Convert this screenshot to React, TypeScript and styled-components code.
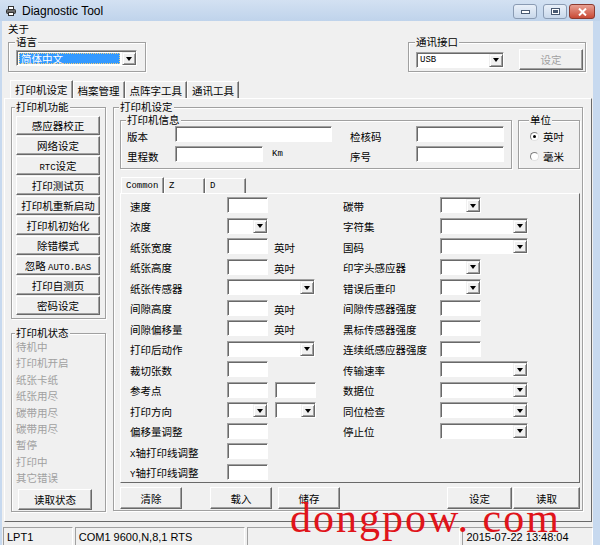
import React from 'react';
import styled, { createGlobalStyle } from 'styled-components';

const GlobalStyle = createGlobalStyle`
  html, body {
    margin: 0;
    padding: 0;
    background: #fff;
  }
  body {
    font-family: "Noto Sans CJK SC", "Liberation Sans", sans-serif;
    font-size: 10.5px;
    color: #000;
  }
`;

const Window = styled.div`
  position: relative;
  width: 600px;
  height: 545px;
  overflow: hidden;
  display: flex;
  flex-direction: column;
  background: #c7d9ef;
`;

const TitleBar = styled.div`
  height: 21px;
  flex: none;
  display: flex;
  align-items: center;
  padding-left: 6px;
  background: linear-gradient(to bottom, #d3e1f2, #bfd3eb);
`;

const TitleText = styled.span`
  margin-left: 6px;
  font-family: "Liberation Sans", sans-serif;
  font-size: 12px;
  color: #000;
`;

const CaptionButtons = styled.div`
  margin-left: auto;
  margin-right: 5px;
  align-self: flex-start;
  margin-top: 4px;
  display: flex;
  gap: 2px;
`;

const CaptionBtn = styled.div`
  box-sizing: border-box;
  width: 24px;
  height: 15px;
  border: 1px solid #8a9bb3;
  border-radius: 3px;
  background: linear-gradient(to bottom, #e9f0f9, #c9d8eb);
  display: flex;
  align-items: center;
  justify-content: center;
`;

const MinBtn = styled(CaptionBtn)`
  margin-right: 4px;
`;

const CloseBtn = styled(CaptionBtn)`
  width: 26px;
  border-color: #8b3a2f;
  background: linear-gradient(to bottom, #e8a093, #c94a36);
`;

const Client = styled.div`
  flex: 1;
  display: flex;
  flex-direction: column;
  margin: 0 7px 0 2px;
  background: #f0f0f0;
`;

const MenuBar = styled.div`
  height: 15px;
  line-height: 15px;
  padding-left: 6px;
  flex: none;
`;

const TopRow = styled.div`
  height: 42px;
  flex: none;
  display: flex;
  justify-content: space-between;
  align-items: flex-start;
  padding: 0 7px 0 6px;
`;

const GroupBox = styled.fieldset`
  box-sizing: border-box;
  margin: 0;
  min-width: 0;
  border: 1px solid #a0a0a0;
  box-shadow: inset 1px 1px 0 #fff, 1px 1px 0 #fff;
`;

const Legend = styled.legend`
  padding: 0 1px;
  margin-left: -1px;
  line-height: 12px;
  font-size: 10.5px;
  background: #f0f0f0;
`;

const LangGroup = styled(GroupBox)`
  width: 138px;
  padding: 2px 5px 5px 7px;
`;

const CommGroup = styled(GroupBox)`
  width: 178px;
  padding: 1px 1px 1px 7px;
  display: flex;
  align-items: center;
  gap: 15px;
`;

const FieldBox = styled.div<{ $w: number }>`
  box-sizing: border-box;
  width: ${(p) => p.$w}px;
  height: 16px;
  flex: none;
  display: flex;
  align-items: stretch;
  padding: 1px 0 0 1px;
  background: #fff;
  border: 1px solid;
  border-color: #a0a0a0 #fff #fff #a0a0a0;
  box-shadow: inset 1px 1px 0 #696969;
`;

const ComboText = styled.span`
  flex: 1;
  display: flex;
  align-items: center;
  padding-left: 2px;
  overflow: hidden;
  white-space: nowrap;
`;

const SelectedText = styled.span`
  flex: 1;
  margin: 1px 2px 1px 1px;
  padding-left: 2px;
  background: #3399ff;
  color: #fff;
  line-height: 11px;
  outline: 1px dotted #f7d07a;
  outline-offset: -1px;
`;

const DropArrow = styled.span`
  box-sizing: border-box;
  width: 14px;
  flex: none;
  background: #f0f0f0;
  border: 1px solid;
  border-color: #f0f0f0 #696969 #696969 #f0f0f0;
  box-shadow: inset 1px 1px 0 #fff, inset -1px -1px 0 #a0a0a0;
  display: flex;
  align-items: center;
  justify-content: center;
  &::after {
    content: '';
    border-left: 3.5px solid transparent;
    border-right: 3.5px solid transparent;
    border-top: 4px solid #000;
  }
`;

const Button = styled.button<{ $w: number; $h?: number }>`
  box-sizing: border-box;
  width: ${(p) => p.$w}px;
  height: ${(p) => p.$h ?? 19}px;
  flex: none;
  margin: 0;
  padding: 0;
  font-family: inherit;
  font-size: 10.5px;
  color: #000;
  background: #f0f0f0;
  border: 1px solid;
  border-color: #fff #696969 #696969 #fff;
  box-shadow: inset -1px -1px 0 #a0a0a0;
  border-radius: 0;
  &:disabled {
    color: #a0a0a0;
  }
`;

const Mono = styled.span`
  font-family: "Liberation Mono", monospace;
  font-size: 9px;
`;

const TabStrip = styled.div`
  height: 20px;
  flex: none;
  display: flex;
  align-items: flex-end;
  padding-left: 8px;
`;

const Tab = styled.div<{ $active?: boolean }>`
  box-sizing: border-box;
  height: ${(p) => (p.$active ? 18 : 17)}px;
  padding: 0 4px;
  display: flex;
  align-items: center;
  border-top: 1px solid #fff;
  border-left: 1px solid #fff;
  border-right: 1px solid #696969;
  box-shadow: inset -1px 0 0 #a0a0a0;
`;

const TabPanel = styled.div`
  box-sizing: border-box;
  height: 424px;
  flex: none;
  margin: 0 1px 0 2px;
  padding: 2px 0 0 6px;
  display: flex;
  align-items: flex-start;
  gap: 7px;
  border: 1px solid;
  border-color: #fff #696969 #696969 #fff;
`;

const LeftCol = styled.div`
  width: 95px;
  display: flex;
  flex-direction: column;
  gap: 8px;
`;

const FuncGroup = styled(GroupBox)`
  width: 95px;
  padding: 3px 5px 3px 4px;
  display: flex;
  flex-direction: column;
  gap: 1px;
`;

const StatusGroup = styled(GroupBox)`
  width: 95px;
  padding: 0 4px 1px 4px;
  display: flex;
  flex-direction: column;
`;

const StatusItem = styled.div`
  height: 16.4px;
  line-height: 16.4px;
  color: #a0a0a0;
`;

const ReadStatusButton = styled(Button)`
  margin: 2px 0 0 2px;
`;

const SettingsGroup = styled(GroupBox)`
  width: 470px;
  padding: 1px 2px 1px 6px;
  display: flex;
  flex-direction: column;
`;

const InfoRow = styled.div`
  display: flex;
  gap: 6px;
`;

const InfoGroup = styled(GroupBox)`
  width: 392px;
  padding: 0 0 6px 6px;
  display: grid;
  grid-template-columns: 48px 175px 66px 88px;
  grid-auto-rows: 16px;
  row-gap: 4px;
`;

const InfoLabel = styled.span`
  line-height: 12px;
  margin-top: 5px;
  white-space: nowrap;
`;

const InfoCell = styled.div`
  display: flex;
  align-items: center;
  gap: 9px;
`;

const UnitGroup = styled(GroupBox)`
  width: 62px;
  padding: 0 0 2px 11px;
  display: flex;
  flex-direction: column;
`;

const RadioRow = styled.label`
  height: 20px;
  display: flex;
  align-items: center;
  gap: 4px;
`;

const RadioCircle = styled.span<{ $on?: boolean }>`
  box-sizing: border-box;
  width: 9px;
  height: 9px;
  border-radius: 50%;
  border: 1px solid;
  border-color: #808080 #e0e0e0 #e0e0e0 #808080;
  background: #fff;
  display: flex;
  align-items: center;
  justify-content: center;
  &::after {
    content: '';
    width: 3px;
    height: 3px;
    border-radius: 50%;
    background: ${(p) => (p.$on ? '#000' : 'transparent')};
  }
`;

const InnerTabStrip = styled.div`
  height: 18px;
  margin-top: 6px;
  display: flex;
  align-items: flex-end;
  padding-left: 1px;
`;

const InnerTab = styled(Tab)<{ $w: number }>`
  width: ${(p) => p.$w}px;
  height: ${(p) => (p.$active ? 16 : 15)}px;
`;

const CommonPanel = styled.div`
  box-sizing: border-box;
  height: 290px;
  padding: 1px 0 0 9px;
  display: flex;
  border: 1px solid;
  border-color: #fff #696969 #696969 #fff;
`;

const FieldColumn = styled.div<{ $w: number }>`
  width: ${(p) => p.$w}px;
  display: grid;
  grid-template-columns: 97px auto;
  grid-auto-rows: 20.5px;
  align-items: center;
  align-content: start;
`;

const FieldLabel = styled.span`
  padding-top: 2px;
  white-space: nowrap;
`;

const Controls = styled.div`
  display: flex;
  align-items: center;
  gap: 7px;
`;

const UnitText = styled.span`
  padding-top: 3px;
  margin-left: -1px;
`;

const ActionRow = styled.div`
  display: flex;
  margin-top: 4px;
`;

const ActionButton = styled(Button)<{ $ml?: number }>`
  margin-left: ${(p) => (p.$ml ?? 0)}px;
`;

const PushRight = styled(ActionButton)`
  margin-left: auto;
`;

const StatusBar = styled.div`
  flex: 1;
  display: flex;
  gap: 2px;
  padding: 5px 0 0 1px;
  font-family: "Liberation Sans", sans-serif;
  font-size: 11px;
`;

const StatusPanel = styled.div<{ $w: number }>`
  box-sizing: border-box;
  width: ${(p) => p.$w}px;
  height: 20px;
  padding: 0 3px;
  display: flex;
  align-items: center;
  border: 1px solid;
  border-color: #a0a0a0 #fff #fff #a0a0a0;
  white-space: nowrap;
`;

const Watermark = styled.div`
  position: absolute;
  left: 290px;
  top: 497px;
  font-family: "Liberation Serif", serif;
  font-size: 42px;
  line-height: 42px;
  letter-spacing: 2px;
  color: #e0141a;
  white-space: nowrap;
  pointer-events: none;
`;

function TextBox({ w }: { w: number }) {
  return <FieldBox $w={w} />;
}

function ComboBox({ w, children }: { w: number; children?: React.ReactNode }) {
  return (
    <FieldBox $w={w}>
      <ComboText>{children}</ComboText>
      <DropArrow />
    </FieldBox>
  );
}

const S = 41;
const W = 88;
const unit = <UnitText>英吋</UnitText>;

const leftRows: [React.ReactNode, React.ReactNode[]][] = [
  ['速度', [<TextBox w={S} />]],
  ['浓度', [<ComboBox w={S} />]],
  ['纸张宽度', [<TextBox w={S} />, unit]],
  ['纸张高度', [<TextBox w={S} />, unit]],
  ['纸张传感器', [<ComboBox w={W} />]],
  ['间隙高度', [<TextBox w={S} />, unit]],
  ['间隙偏移量', [<TextBox w={S} />, unit]],
  ['打印后动作', [<ComboBox w={W} />]],
  ['裁切张数', [<TextBox w={S} />]],
  ['参考点', [<TextBox w={S} />, <TextBox w={S} />]],
  ['打印方向', [<ComboBox w={S} />, <ComboBox w={S} />]],
  ['偏移量调整', [<TextBox w={S} />]],
  [<><Mono>X</Mono>轴打印线调整</>, [<TextBox w={S} />]],
  [<><Mono>Y</Mono>轴打印线调整</>, [<TextBox w={S} />]],
];

const rightRows: [React.ReactNode, React.ReactNode[]][] = [
  ['碳带', [<ComboBox w={S} />]],
  ['字符集', [<ComboBox w={W} />]],
  ['国码', [<ComboBox w={W} />]],
  ['印字头感应器', [<ComboBox w={S} />]],
  ['错误后重印', [<ComboBox w={S} />]],
  ['间隙传感器强度', [<TextBox w={S} />]],
  ['黑标传感器强度', [<TextBox w={S} />]],
  ['连续纸感应器强度', [<TextBox w={S} />]],
  ['传输速率', [<ComboBox w={W} />]],
  ['数据位', [<ComboBox w={W} />]],
  ['同位检查', [<ComboBox w={W} />]],
  ['停止位', [<ComboBox w={W} />]],
];

const funcButtons: React.ReactNode[] = [
  '感应器校正',
  '网络设定',
  <><Mono>RTC</Mono>设定</>,
  '打印测试页',
  '打印机重新启动',
  '打印机初始化',
  '除错模式',
  <>忽略 <Mono>AUTO.BAS</Mono></>,
  '打印自测页',
  '密码设定',
];

const statusItems = ['待机中', '打印机开启', '纸张卡纸', '纸张用尽', '碳带用尽', '碳带用尽', '暂停', '打印中', '其它错误'];

function renderRows(rows: [React.ReactNode, React.ReactNode[]][]) {
  return rows.map(([label, ctls], i) => (
    <React.Fragment key={i}>
      <FieldLabel>{label}</FieldLabel>
      <Controls>
        {ctls.map((c, j) => (
          <React.Fragment key={j}>{c}</React.Fragment>
        ))}
      </Controls>
    </React.Fragment>
  ));
}

export default function App() {
  return (
    <>
      <GlobalStyle />
      <Window>
        <TitleBar>
          <svg width="10" height="10" viewBox="0 0 10 10">
            <rect x="2.5" y="0.5" width="5" height="3" fill="#fff" stroke="#333" />
            <rect x="0.5" y="3.5" width="9" height="4" rx="1" fill="#6b6b6b" stroke="#333" />
            <rect x="2.5" y="6.5" width="5" height="3" fill="#fff" stroke="#333" />
          </svg>
          <TitleText>Diagnostic Tool</TitleText>
          <CaptionButtons>
            <MinBtn>
              <svg width="9" height="4" viewBox="0 0 9 4">
                <rect x="0.5" y="0.5" width="8" height="3" fill="#fff" stroke="#4a5a72" />
              </svg>
            </MinBtn>
            <CaptionBtn>
              <svg width="9" height="7" viewBox="0 0 9 7">
                <rect x="0.5" y="0.5" width="8" height="6" fill="#fff" stroke="#4a5a72" />
                <rect x="2" y="2" width="5" height="3" fill="#4a5a72" />
              </svg>
            </CaptionBtn>
            <CloseBtn>
              <svg width="9" height="8" viewBox="0 0 9 8">
                <path d="M1 0.5 L8 7.5 M8 0.5 L1 7.5" stroke="#fff" strokeWidth="2" />
              </svg>
            </CloseBtn>
          </CaptionButtons>
        </TitleBar>

        <Client>
          <MenuBar>关于</MenuBar>

          <TopRow>
            <LangGroup>
              <Legend>语言</Legend>
              <FieldBox $w={121}>
                <SelectedText>简体中文</SelectedText>
                <DropArrow />
              </FieldBox>
            </LangGroup>
            <CommGroup>
              <Legend>通讯接口</Legend>
              <ComboBox w={88}>
                <Mono>USB</Mono>
              </ComboBox>
              <Button $w={64} $h={21} disabled>
                设定
              </Button>
            </CommGroup>
          </TopRow>

          <TabStrip>
            <Tab $active>打印机设定</Tab>
            <Tab>档案管理</Tab>
            <Tab>点阵字工具</Tab>
            <Tab>通讯工具</Tab>
          </TabStrip>

          <TabPanel>
            <LeftCol>
              <FuncGroup>
                <Legend>打印机功能</Legend>
                {funcButtons.map((b, i) => (
                  <Button key={i} $w={84}>
                    {b}
                  </Button>
                ))}
              </FuncGroup>
              <StatusGroup>
                <Legend>打印机状态</Legend>
                {statusItems.map((s, i) => (
                  <StatusItem key={i}>{s}</StatusItem>
                ))}
                <ReadStatusButton $w={74} $h={21}>
                  读取状态
                </ReadStatusButton>
              </StatusGroup>
            </LeftCol>

            <SettingsGroup>
              <Legend>打印机设定</Legend>
              <InfoRow>
                <InfoGroup>
                  <Legend>打印机信息</Legend>
                  <InfoLabel>版本</InfoLabel>
                  <InfoCell>
                    <TextBox w={157} />
                  </InfoCell>
                  <InfoLabel>检核码</InfoLabel>
                  <InfoCell>
                    <TextBox w={88} />
                  </InfoCell>
                  <InfoLabel>里程数</InfoLabel>
                  <InfoCell>
                    <TextBox w={88} />
                    <Mono>Km</Mono>
                  </InfoCell>
                  <InfoLabel>序号</InfoLabel>
                  <InfoCell>
                    <TextBox w={88} />
                  </InfoCell>
                </InfoGroup>
                <UnitGroup>
                  <Legend>单位</Legend>
                  <RadioRow>
                    <RadioCircle $on />
                    英吋
                  </RadioRow>
                  <RadioRow>
                    <RadioCircle />
                    毫米
                  </RadioRow>
                </UnitGroup>
              </InfoRow>

              <InnerTabStrip>
                <InnerTab $active $w={43}>
                  <Mono>Common</Mono>
                </InnerTab>
                <InnerTab $w={41}>
                  <Mono>Z</Mono>
                </InnerTab>
                <InnerTab $w={41}>
                  <Mono>D</Mono>
                </InnerTab>
              </InnerTabStrip>

              <CommonPanel>
                <FieldColumn $w={213}>{renderRows(leftRows)}</FieldColumn>
                <FieldColumn $w={230}>{renderRows(rightRows)}</FieldColumn>
              </CommonPanel>

              <ActionRow>
                <ActionButton $w={62} $h={22}>清除</ActionButton>
                <ActionButton $w={62} $h={22} $ml={28}>载入</ActionButton>
                <ActionButton $w={62} $h={22} $ml={6}>储存</ActionButton>
                <PushRight $w={65} $h={22}>设定</PushRight>
                <ActionButton $w={67} $h={22} $ml={1}>读取</ActionButton>
              </ActionRow>
            </SettingsGroup>
          </TabPanel>

          <StatusBar>
            <StatusPanel $w={70}>LPT1</StatusPanel>
            <StatusPanel $w={171}>COM1 9600,N,8,1 RTS</StatusPanel>
            <StatusPanel $w={214} />
            <StatusPanel $w={131}>2015-07-22 13:48:04</StatusPanel>
          </StatusBar>
        </Client>

        <Watermark>dongpow. com</Watermark>
      </Window>
    </>
  );
}
